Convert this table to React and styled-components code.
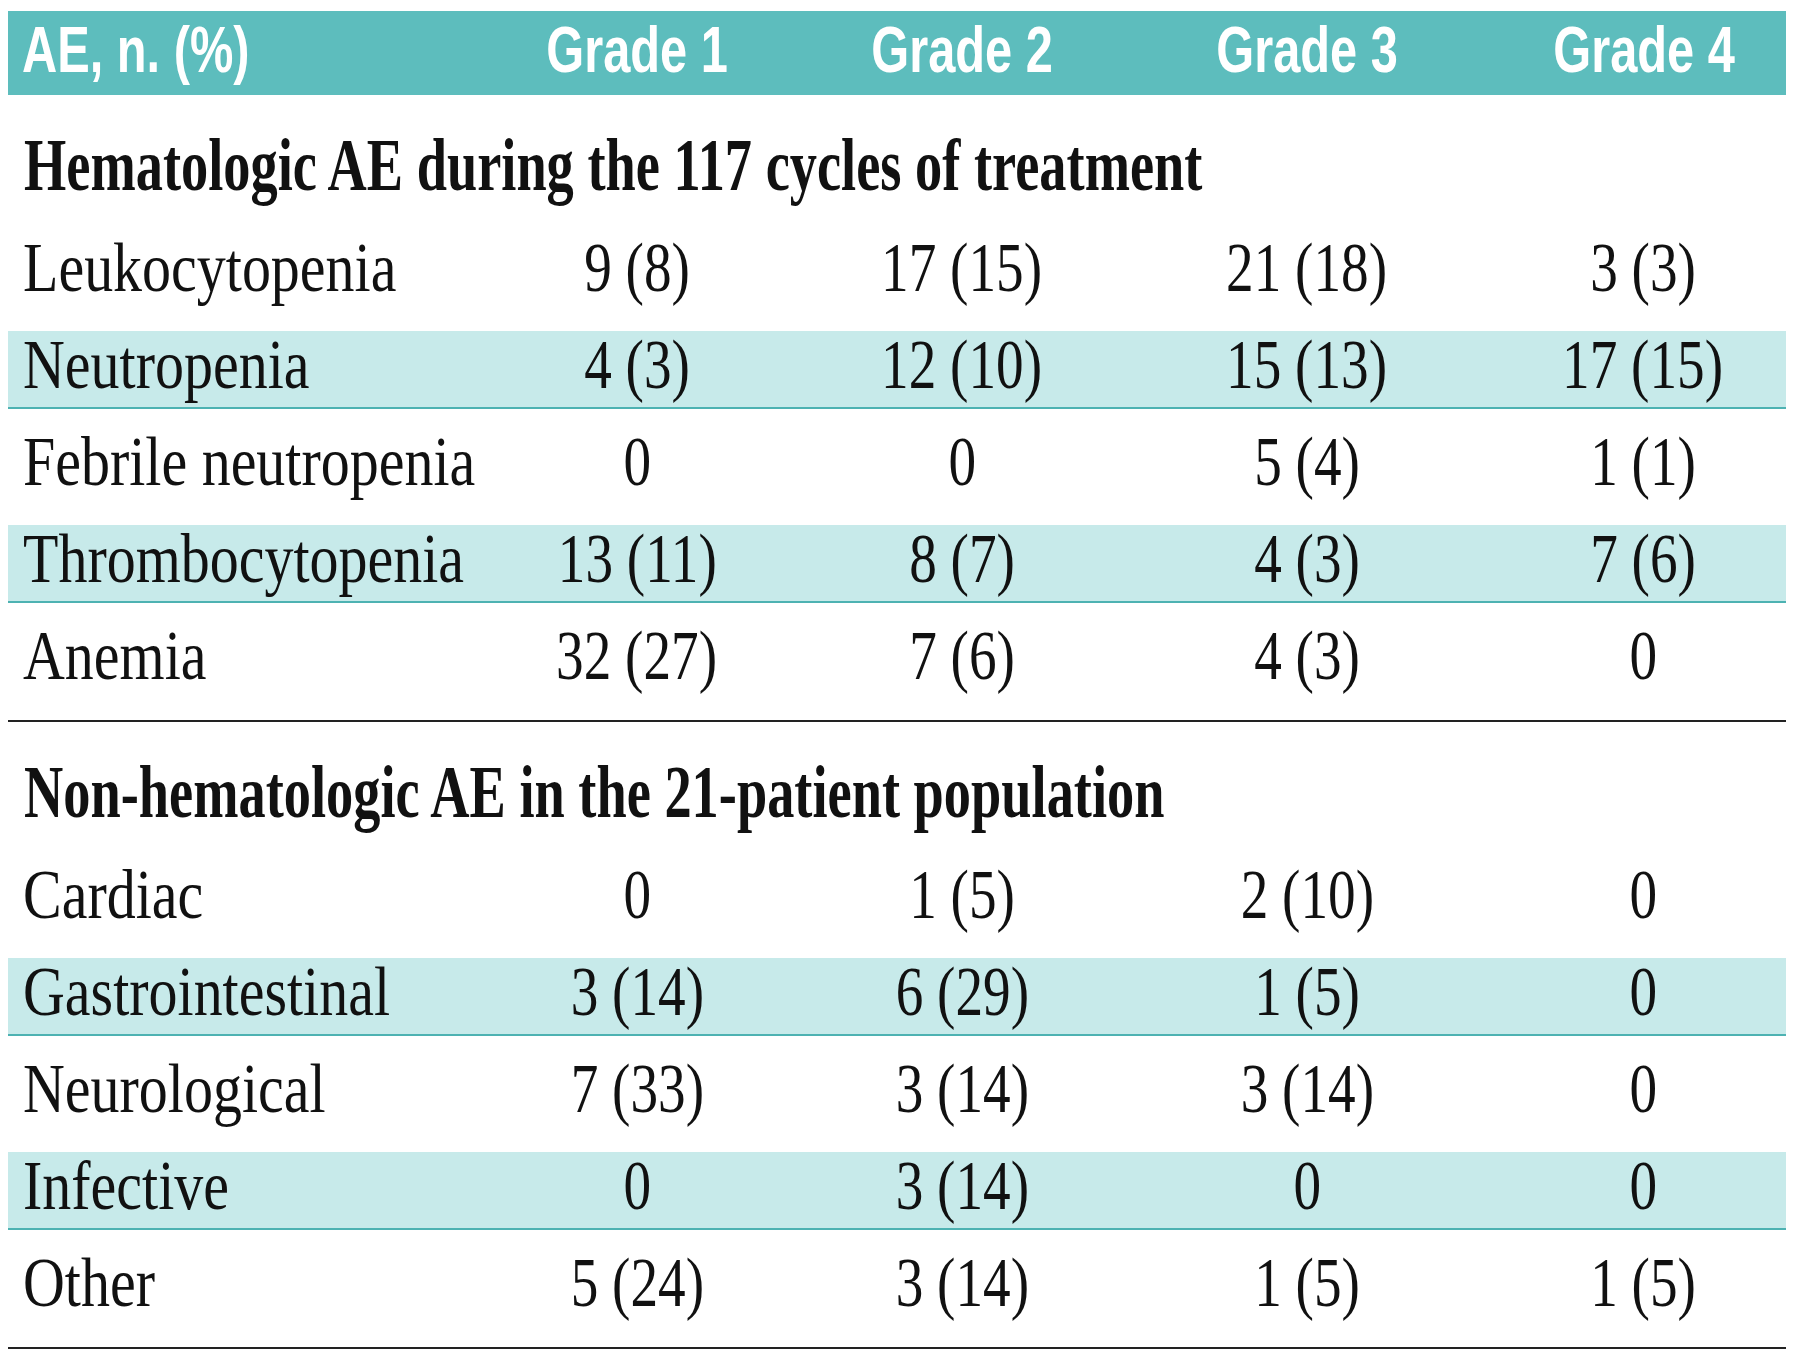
import React from "react";
import styled, { createGlobalStyle } from "styled-components";

const GlobalStyle = createGlobalStyle`
  body {
    margin: 0;
    background: #ffffff;
  }
`;

const COLS = "466px 326px 324px 366px 296px";

const Table = styled.div`
  width: 1778px;
  margin: 11px 0 0 8px;
  display: flex;
  flex-direction: column;
`;

const HeadRow = styled.div`
  display: grid;
  grid-template-columns: ${COLS};
  align-items: center;
  height: 84px;
  box-sizing: border-box;
  padding-bottom: 8px;
  background: #5dbdbd;
`;

const HeadCell = styled.div`
  color: #ffffff;
  font-family: "Liberation Sans", Arial, sans-serif;
  font-weight: 700;
  font-size: 65px;
  line-height: 1;
  text-align: ${(p) => (p.$first ? "left" : "center")};
  padding-left: ${(p) => (p.$first ? "14px" : p.$last ? "12px" : "0")};
  white-space: nowrap;
`;

const Squeeze = styled.span`
  display: inline-block;
  white-space: nowrap;
  transform: scaleX(${(p) => p.$sx});
  transform-origin: ${(p) => (p.$left ? "left center" : "center center")};
`;

const Section = styled.div`
  display: flex;
  flex-direction: column;
  gap: 19px;
  padding-bottom: 20px;
  border-bottom: 2px solid #222;
`;

const SectionTitle = styled.div`
  height: 78px;
  margin: 34px 0 8px;
  display: flex;
  align-items: center;
  padding: 0 0 8px 16px;
  box-sizing: border-box;
  font-family: "Liberation Serif", "Times New Roman", serif;
  font-weight: 700;
  font-size: 75px;
  line-height: 1;
  color: #111;
`;

const Row = styled.div`
  display: grid;
  grid-template-columns: ${COLS};
  align-items: center;
  height: 78px;
  box-sizing: border-box;
  padding-bottom: ${(p) => (p.$shaded ? "14px" : "16px")};
  background: ${(p) => (p.$shaded ? "#c7eaea" : "transparent")};
  border-bottom: 2px solid ${(p) => (p.$shaded ? "#4db2b2" : "transparent")};
`;

const Cell = styled.div`
  font-family: "Liberation Serif", "Times New Roman", serif;
  font-size: 69px;
  line-height: 1;
  color: #111;
  text-align: ${(p) => (p.$first ? "left" : "center")};
  padding-left: ${(p) => (p.$first ? "15px" : p.$last ? "10px" : "0")};
  white-space: nowrap;
`;

const sections = [
  {
    title: "Hematologic AE during the 117 cycles of treatment",
    rows: [
      ["Leukocytopenia", "9 (8)", "17 (15)", "21 (18)", "3 (3)"],
      ["Neutropenia", "4 (3)", "12 (10)", "15 (13)", "17 (15)"],
      ["Febrile neutropenia", "0", "0", "5 (4)", "1 (1)"],
      ["Thrombocytopenia", "13 (11)", "8 (7)", "4 (3)", "7 (6)"],
      ["Anemia", "32 (27)", "7 (6)", "4 (3)", "0"],
    ],
  },
  {
    title: "Non-hematologic AE in the 21-patient population",
    rows: [
      ["Cardiac", "0", "1 (5)", "2 (10)", "0"],
      ["Gastrointestinal", "3 (14)", "6 (29)", "1 (5)", "0"],
      ["Neurological", "7 (33)", "3 (14)", "3 (14)", "0"],
      ["Infective", "0", "3 (14)", "0", "0"],
      ["Other", "5 (24)", "3 (14)", "1 (5)", "1 (5)"],
    ],
  },
];

const heads = ["AE, n. (%)", "Grade 1", "Grade 2", "Grade 3", "Grade 4"];

const App = () => {
  return (
    <>
      <GlobalStyle />
      <Table>
        <HeadRow>
          {heads.map((h, i) => (
            <HeadCell key={h} $first={i === 0} $last={i === 4}>
              <Squeeze $sx={0.75} $left={i === 0}>
                {h}
              </Squeeze>
            </HeadCell>
          ))}
        </HeadRow>
        {sections.map((s) => (
          <Section key={s.title}>
            <SectionTitle>
              <Squeeze $sx={0.725} $left>
                {s.title}
              </Squeeze>
            </SectionTitle>
            {s.rows.map((r, ri) => (
              <Row key={r[0]} $shaded={ri % 2 === 1}>
                {r.map((c, ci) => (
                  <Cell key={ci} $first={ci === 0} $last={ci === 4}>
                    <Squeeze $sx={ci === 0 ? 0.84 : 0.8} $left={ci === 0}>
                      {c}
                    </Squeeze>
                  </Cell>
                ))}
              </Row>
            ))}
          </Section>
        ))}
      </Table>
    </>
  );
};

export default App;
